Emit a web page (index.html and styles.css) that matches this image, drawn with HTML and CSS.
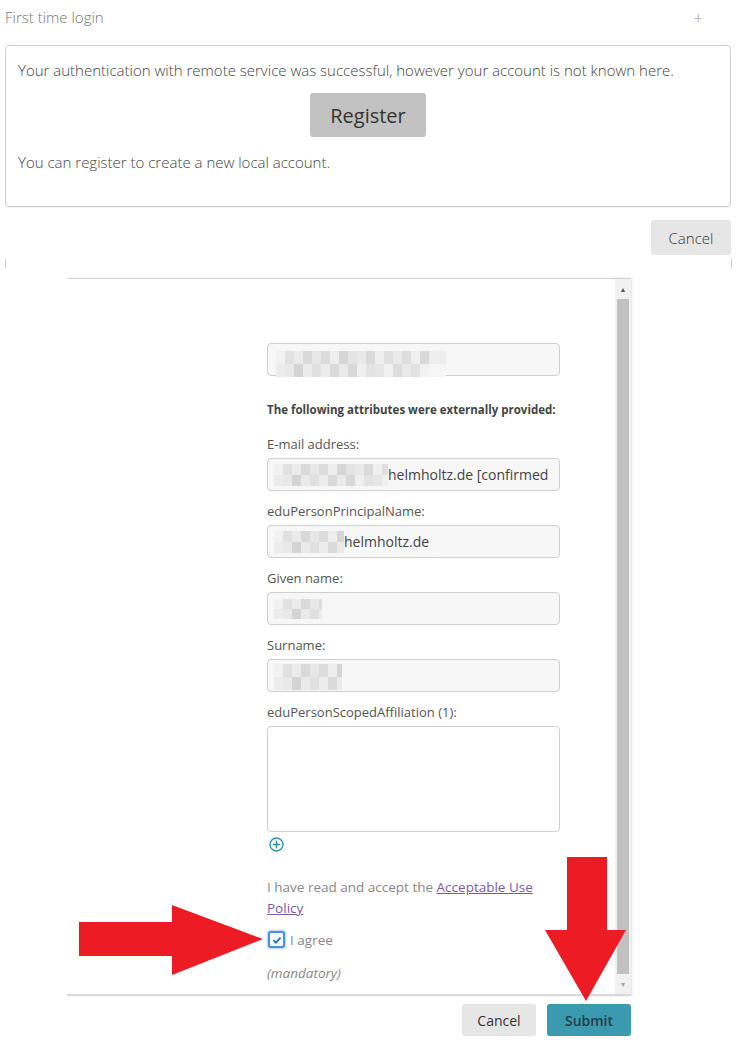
FILE: index.html
```html
<!DOCTYPE html>
<html lang="en">
<head>
    <meta charset="UTF-8">
    <title>First time login</title>
    <link rel="stylesheet" href="styles.css">
</head>
<body>
    <header class="collapseHead">
        <span class="collapseTitle">First time login</span>
        <span class="collapsePlus">+</span>
    </header>

    <section class="noticeBox">
        <p class="noticeText">Your authentication with remote service was successful, however your account is not known here.</p>
        <div class="registerRow">
            <button class="btnRegister">Register</button>
        </div>
        <p class="noticeText noticeLast">You can register to create a new local account.</p>
    </section>

    <div class="dialogActions">
        <button class="btn btnGrey">Cancel</button>
    </div>
    <div class="dialogEdge"></div>

    <div class="regPanel">
        <div class="regScroll">
            <form class="regForm">
                <div class="inputField firstInput">
                    <div class="blur blurId"></div>
                </div>

                <p class="attrTitle">The following attributes were externally provided:</p>

                <label class="fieldLabel">E-mail address:</label>
                <div class="inputField">
                    <div class="blur blurMail"></div>
                    <span class="fieldValue">helmholtz.de [confirmed</span>
                </div>

                <label class="fieldLabel">eduPersonPrincipalName:</label>
                <div class="inputField">
                    <div class="blur blurEppn"></div>
                    <span class="fieldValue">helmholtz.de</span>
                </div>

                <label class="fieldLabel">Given name:</label>
                <div class="inputField">
                    <div class="blur blurGiven"></div>
                </div>

                <label class="fieldLabel">Surname:</label>
                <div class="inputField">
                    <div class="blur blurSurname"></div>
                </div>

                <label class="fieldLabel">eduPersonScopedAffiliation (1):</label>
                <div class="textField"></div>

                <div class="addRow">
                    <svg class="addIcon" width="15" height="15" viewBox="0 0 15 15">
                        <circle cx="7.5" cy="7.5" r="6.5" fill="none" stroke="#2f8fb0" stroke-width="1.4"/>
                        <path d="M7.5 3.8v7.4M3.8 7.5h7.4" stroke="#2f8fb0" stroke-width="1.6"/>
                    </svg>
                </div>

                <p class="aupText">I have read and accept the <a href="#" class="aupLink">Acceptable Use Policy</a></p>

                <div class="agreeRow">
                    <span class="checkBox">
                        <svg width="10" height="10" viewBox="0 0 10 10">
                            <path d="M1.5 5.2l2.4 2.4 4.6-5" fill="none" stroke="#2a6fc9" stroke-width="1.8"/>
                        </svg>
                    </span>
                    <span class="agreeLabel">I agree</span>
                </div>

                <p class="mandatory">(mandatory)</p>
            </form>
        </div>
        <div class="scrollbar">
            <span class="scrollArrow">&#9650;</span>
            <span class="scrollThumb"></span>
            <span class="scrollArrow">&#9660;</span>
        </div>
    </div>

    <div class="regActions">
        <button class="btn btnGrey btnSmall">Cancel</button>
        <button class="btn btnSubmit">Submit</button>
    </div>

    <!-- red annotation arrows -->
    <svg class="arrowLeft" width="186" height="72" viewBox="0 0 186 72">
        <polygon points="0,17 93,17 93,0 184,34 93,70 93,51 0,51" fill="#ed1c24"/>
    </svg>
    <svg class="arrowDown" width="82" height="145" viewBox="0 0 82 145">
        <polygon points="22,0 62,0 62,73 81,73 41,144 0,73 22,73" fill="#ed1c24"/>
    </svg>
</body>
</html>
```

FILE: styles.css
```css
body, html {
  margin: 0;
  padding: 0;
  background-color: #fff;
  font-family: "Open Sans", "Liberation Sans", sans-serif;
  color: #555;
}

body {
  position: relative;
  height: 1042px;
  overflow: hidden;
}

p {
  margin: 0;
}

.collapseHead {
  height: 34px;
  display: flex;
  align-items: center;
  justify-content: space-between;
  padding: 0 38px 0 5px;

  .collapseTitle {
    font-size: 15px;
    font-weight: 300;
    color: #777;
  }

  .collapsePlus {
    font-size: 17px;
    font-weight: 300;
    color: #999;
  }
}

.noticeBox {
  margin: 11px 10px 0 5px;
  height: 162px;
  box-sizing: border-box;
  border: 1px solid #d0d0d0;
  border-radius: 4px;
  padding: 14px 12px 0;
  box-shadow: 0 1px 1px rgba(0, 0, 0, 0.05);

  .noticeText {
    font-size: 15px;
    font-weight: 300;
    line-height: 20px;
    color: #444;
  }

  .registerRow {
    display: flex;
    justify-content: center;
    margin: 13px 0 15px;
  }

  .btnRegister {
    width: 116px;
    height: 44px;
    border: none;
    border-radius: 3px;
    background-color: #c2c2c2;
    color: #333;
    font-family: inherit;
    font-size: 20px;
    font-weight: 400;
  }
}

.btn {
  border: none;
  border-radius: 3px;
  font-family: inherit;
  cursor: pointer;
}

.btnGrey {
  background-color: #e6e6e6;
  color: #333;
}

.dialogActions {
  display: flex;
  justify-content: flex-end;
  margin: 13px 10px 0 0;

  .btn {
    width: 80px;
    height: 35px;
    font-size: 15px;
    font-weight: 300;
  }
}

.dialogEdge {
  margin: 4px 9px 0 5px;
  height: 9px;
  border-left: 1px solid #ccc;
  border-right: 1px solid #ccc;
}

.regPanel {
  margin: 10px 0 0 67px;
  width: 564px;
  height: 718px;
  box-sizing: border-box;
  border-top: 1px solid #d4d4d4;
  border-bottom: 2px solid #d8d8d8;
  display: flex;
  box-shadow: 1px 0 2px rgba(0, 0, 0, 0.12);
}

.regScroll {
  flex: 1;
  padding-left: 200px;
}

.regForm {
  width: 293px;
  padding-top: 64px;
  font-size: 13px;
}

.inputField {
  position: relative;
  height: 33px;
  box-sizing: border-box;
  border: 1px solid #cfcfcf;
  border-radius: 4px;
  background-color: #f7f7f7;
  margin-bottom: 10px;
  display: flex;
  align-items: center;
  padding-left: 6px;
  overflow: visible;

  .fieldValue {
    font-size: 14px;
    color: #444;
    white-space: nowrap;
    overflow: hidden;
  }
}

.firstInput {
  margin-bottom: 0;
}

.blur {
  height: 22px;
  flex-shrink: 0;
  background-image:
    linear-gradient(90deg, #f2f2f2 0 9px, #e1e1e1 9px 18px, #ebebeb 18px 27px, #d9d9d9 27px 36px, #e7e7e7 36px 45px, #dcdcdc 45px 54px, #eeeeee 54px 63px, #d6d6d6 63px 72px, #e4e4e4 72px 81px, #e9e9e9 81px 90px, #dadada 90px 99px, #efefef 99px 108px, #e0e0e0 108px 117px, #ebebeb 117px 126px, #dedede 126px 135px, #f0f0f0 135px 144px, #d9d9d9 144px 153px, #eeeeee 153px 170px),
    linear-gradient(90deg, #ececec 0 9px, #e9e9e9 9px 18px, #d4d4d4 18px 27px, #eaeaea 27px 36px, #e0e0e0 36px 45px, #ececec 45px 54px, #dadada 54px 63px, #eaeaea 63px 72px, #d8d8d8 72px 81px, #efefef 81px 90px, #e3e3e3 90px 99px, #e6e6e6 99px 108px, #f0f0f0 108px 117px, #dcdcdc 117px 126px, #e9e9e9 126px 135px, #e2e2e2 135px 144px, #f1f1f1 144px 153px, #f6f6f6 153px 170px);
  background-size: 100% 50%, 100% 50%;
  background-position: 0 0, 0 100%;
  background-repeat: no-repeat;
}

.blurId {
  width: 170px;
  height: 26px;
  margin-top: 8px;
  margin-left: 2px;
}

.blurMail {
  width: 114px;
}

.blurEppn {
  width: 70px;
}

.blurGiven {
  width: 48px;
  height: 20px;
}

.blurSurname {
  width: 68px;
  height: 26px;
  margin-top: 2px;
}

.attrTitle {
  font-size: 11.5px;
  font-weight: 700;
  color: #444;
  line-height: 16px;
  margin: 26px 0 16px;
}

.fieldLabel {
  display: block;
  line-height: 20px;
  margin-bottom: 4px;
  color: #555;
}

.textField {
  height: 106px;
  box-sizing: border-box;
  border: 1px solid #cfcfcf;
  border-radius: 4px;
  background-color: #fff;
}

.addRow {
  height: 14px;
  margin: 5px 0 0 2px;

  .addIcon {
    display: block;
  }
}

.aupText {
  margin-top: 26px;
  font-size: 13.5px;
  line-height: 21px;
  color: #888;

  .aupLink {
    color: #7b5aa6;
    text-decoration: underline;
  }
}

.agreeRow {
  display: flex;
  align-items: center;
  gap: 5px;
  margin-top: 10px;
  height: 21px;

  .checkBox {
    width: 13px;
    height: 13px;
    border: 2px solid #4b8fe0;
    border-radius: 3px;
    background-color: #f4f8ff;
    display: flex;
    align-items: center;
    justify-content: center;
    box-shadow: 0 0 2px 1px rgba(75, 143, 224, 0.45);
    margin-left: 1px;
  }

  .agreeLabel {
    font-size: 13.5px;
    color: #888;
  }
}

.mandatory {
  margin-top: 13px;
  font-size: 13.5px;
  font-style: italic;
  color: #888;
  line-height: 21px;
}

.scrollbar {
  width: 16px;
  background-color: #f1f1f1;
  display: flex;
  flex-direction: column;

  .scrollArrow {
    height: 20px;
    font-size: 7px;
    color: #555;
    display: flex;
    align-items: center;
    justify-content: center;
  }

  .scrollArrow:last-child {
    color: #a3a3a3;
  }

  .scrollThumb {
    flex: 1;
    margin: 0 2px;
    background-color: #c1c1c1;
  }
}

.regActions {
  width: 631px;
  display: flex;
  justify-content: flex-end;
  gap: 11px;
  margin-top: 8px;

  .btn {
    height: 32px;
    font-size: 14px;
  }

  .btnSmall {
    width: 74px;
  }

  .btnSubmit {
    width: 84px;
    background-color: #3a9ab0;
    color: #253c48;
    font-weight: 600;
  }
}

.arrowLeft {
  position: absolute;
  left: 79px;
  top: 905px;
}

.arrowDown {
  position: absolute;
  left: 545px;
  top: 857px;
}
```
